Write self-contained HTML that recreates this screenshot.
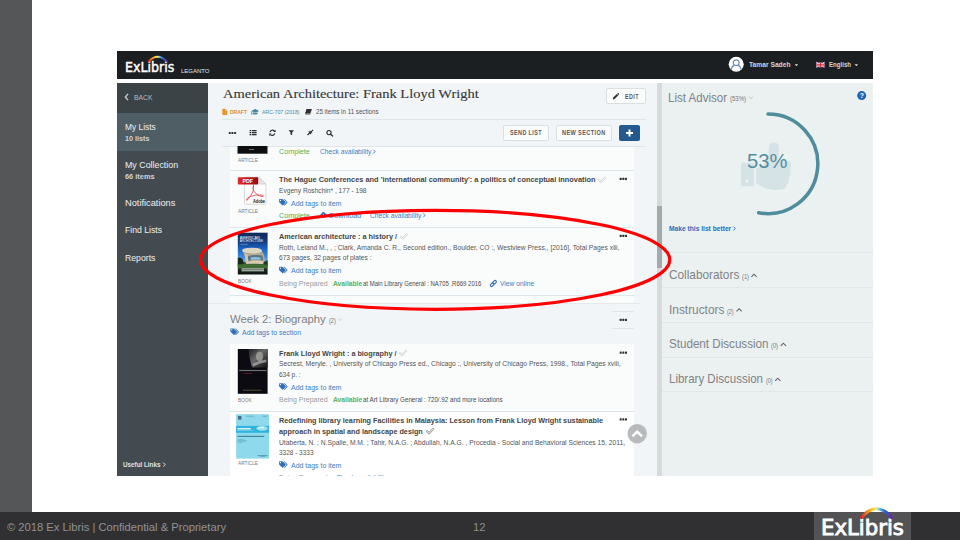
<!DOCTYPE html>
<html lang="en">
<head>
<meta charset="utf-8">
<title>Leganto - American Architecture: Frank Lloyd Wright</title>
<style>
html,body{margin:0;padding:0;}
body{width:960px;height:540px;position:relative;overflow:hidden;background:#ffffff;font-family:"Liberation Sans",sans-serif;}
.a{position:absolute;display:block;}
.t{position:absolute;display:block;white-space:nowrap;transform-origin:0 0;}
svg{position:absolute;overflow:visible;}
#leftbar{left:0;top:0;width:32px;height:512px;background:#555658;}
#footer{left:0;top:512px;width:960px;height:28px;background:#303032;}
#logobox{left:814px;top:512px;width:97px;height:28px;background:#535355;}
#shot{left:117px;top:51px;width:756px;height:425px;overflow:hidden;background:#ffffff;}
#in{left:-117px;top:-51px;width:960px;height:540px;}
#topbar{left:117px;top:51px;width:756px;height:28px;background:#1b1f22;}
#sidebar{left:117px;top:83px;width:91px;height:393px;background:#444b50;}
#backrow{left:117px;top:83px;width:91px;height:30px;background:#3c4347;}
#selrow{left:117px;top:113px;width:91px;height:38px;background:#4f5e64;}
#main{left:208px;top:83px;width:449px;height:393px;background:#f1f5f7;}
#track{left:657px;top:83px;width:5px;height:393px;background:#d6dadc;}
#thumb{left:657px;top:206px;width:5px;height:62px;background:#a4a9ac;}
#right{left:662px;top:83px;width:211px;height:393px;background:#ebf0f1;}
.hr{height:1px;background:#dde6eb;}
.panel{left:230px;width:404px;background:#fafcfc;}
.btn{background:#fafcfc;border:1px solid #dcdfe1;border-radius:2px;box-sizing:border-box;}
</style>
</head>
<body>
<div class="a" id="leftbar"></div>
<div class="a" id="footer"></div>
<div class="a" id="logobox"></div>
<span class="t" style="left:7.00px;top:521.00px;font:400 11.6px/1 'Liberation Sans', sans-serif;color:#929294;transform:scaleX(0.9656);">© 2018 Ex Libris | Confidential &amp; Proprietary</span>
<span class="t" style="left:472.80px;top:521.00px;font:400 11.6px/1 'Liberation Sans', sans-serif;color:#8c8c8e;transform:scaleX(0.9685);">12</span>
<span class="t" style="left:821.30px;top:517.00px;font:400 21.4px/1 'DejaVu Sans', 'Liberation Sans', sans-serif;color:#ffffff;transform:scaleX(0.9928);-webkit-text-stroke:0.9px #ffffff;">ExLibris</span>
<svg class="a" style="left:858px;top:505px" width="38" height="16" viewBox="858 505 38 16">
<defs><linearGradient id="rb2" x1="0" y1="0" x2="1" y2="0"><stop offset="0" stop-color="#d7262b"/><stop offset="0.2" stop-color="#f08a1c"/><stop offset="0.38" stop-color="#f7d31d"/><stop offset="0.5" stop-color="#e6e89c"/><stop offset="0.62" stop-color="#5ab4e6"/><stop offset="0.8" stop-color="#2a5fd0"/><stop offset="1" stop-color="#6a2c9c"/></linearGradient></defs>
<path d="M861.5 517.5 Q876.5 500 891.5 517.5" fill="none" stroke="url(#rb2)" stroke-width="3.2" stroke-linecap="round"/>
</svg>

<div class="a" id="shot"><div class="a" id="in">
<div class="a" id="topbar"></div>
<div class="a" id="sidebar"></div>
<div class="a" id="backrow"></div>
<div class="a" id="selrow"></div>
<div class="a" id="main"></div>
<div class="a" id="track"></div>
<div class="a" id="thumb"></div>
<div class="a" id="right"></div>

<!-- top bar -->
<span class="t" style="left:124.80px;top:60.00px;font:400 14.4px/1 'DejaVu Sans', 'Liberation Sans', sans-serif;color:#ffffff;transform:scaleX(0.8759);-webkit-text-stroke:0.5px #ffffff;">ExLibris</span>
<span class="t" style="left:181.00px;top:69.00px;font:400 5.3px/1 'Liberation Sans', sans-serif;color:#e6e6e6;transform:scaleX(1.1301);">LEGANTO</span>
<span class="t" style="left:748.80px;top:61.00px;font:700 7.8px/1 'Liberation Sans', sans-serif;color:#d2d5d7;transform:scaleX(0.8576);">Tamar Sadeh</span>
<span class="t" style="left:828.70px;top:61.00px;font:700 7.8px/1 'Liberation Sans', sans-serif;color:#d2d5d7;transform:scaleX(0.7845);">English</span>
<svg class="a" style="left:146px;top:53px" width="24" height="10" viewBox="146 53 24 10">
<defs><linearGradient id="rb1" x1="0" y1="0" x2="1" y2="0"><stop offset="0" stop-color="#d7262b"/><stop offset="0.2" stop-color="#f08a1c"/><stop offset="0.38" stop-color="#f7d31d"/><stop offset="0.5" stop-color="#e6e89c"/><stop offset="0.62" stop-color="#5ab4e6"/><stop offset="0.8" stop-color="#2a5fd0"/><stop offset="1" stop-color="#6a2c9c"/></linearGradient></defs>
<path d="M148.6 61.4 Q157.6 52 166.8 61.4" fill="none" stroke="url(#rb1)" stroke-width="2" stroke-linecap="round"/>
</svg>
<svg class="a" style="left:728px;top:56px" width="140" height="18" viewBox="728 56 140 18">
<circle cx="736.2" cy="64.2" r="7.5" fill="#ffffff"/>
<circle cx="736.2" cy="62.8" r="2.9" fill="none" stroke="#6f8fb4" stroke-width="1.2"/>
<path d="M731.4 69.8 Q731.8 66 734.4 65.4 M738 65.4 Q740.6 66 741 69.8" fill="none" stroke="#6f8fb4" stroke-width="1.2"/>
<path d="M794.6 64.2 h3.6 l-1.8 2 z" fill="#d8dadb"/>
<path d="M854.6 64.2 h3.6 l-1.8 2 z" fill="#d8dadb"/>
<rect x="816.3" y="62.4" width="8.2" height="4.9" fill="#2b3a8c"/>
<path d="M816.3 62.4 L824.5 67.3 M824.5 62.4 L816.3 67.3" stroke="#ffffff" stroke-width="1.3"/>
<path d="M816.3 62.4 L824.5 67.3 M824.5 62.4 L816.3 67.3" stroke="#d5202f" stroke-width="0.5"/>
<path d="M820.4 62.4 V67.3 M816.3 64.85 H824.5" stroke="#ffffff" stroke-width="2"/>
<path d="M820.4 62.4 V67.3 M816.3 64.85 H824.5" stroke="#d5202f" stroke-width="1.1"/>
</svg>

<!-- sidebar -->
<span class="t" style="left:133.90px;top:95.00px;font:400 6.7px/1 'Liberation Sans', sans-serif;color:#b4bcc1;transform:scaleX(1.0154);">BACK</span>
<span class="t" style="left:124.60px;top:123.00px;font:400 8.8px/1 'Liberation Sans', sans-serif;color:#eef0f1;transform:scaleX(0.9515);">My Lists</span>
<span class="t" style="left:124.60px;top:135.00px;font:700 7.0px/1 'Liberation Sans', sans-serif;color:#cdd3d6;transform:scaleX(1.0274);">10 lists</span>
<span class="t" style="left:124.60px;top:161.00px;font:400 8.8px/1 'Liberation Sans', sans-serif;color:#eef0f1;transform:scaleX(1.0054);">My Collection</span>
<span class="t" style="left:124.60px;top:173.00px;font:700 7.0px/1 'Liberation Sans', sans-serif;color:#cdd3d6;transform:scaleX(1.0595);">66 items</span>
<span class="t" style="left:124.60px;top:199.00px;font:400 8.8px/1 'Liberation Sans', sans-serif;color:#eef0f1;transform:scaleX(1.0517);">Notifications</span>
<span class="t" style="left:124.60px;top:226.00px;font:400 8.8px/1 'Liberation Sans', sans-serif;color:#eef0f1;transform:scaleX(0.9826);">Find Lists</span>
<span class="t" style="left:124.60px;top:254.00px;font:400 8.8px/1 'Liberation Sans', sans-serif;color:#eef0f1;transform:scaleX(0.9866);">Reports</span>
<span class="t" style="left:123.00px;top:462.00px;font:700 6.6px/1 'Liberation Sans', sans-serif;color:#dfe3e5;transform:scaleX(0.9562);">Useful Links</span>
<svg class="a" style="left:120px;top:90px" width="60" height="385" viewBox="120 90 60 385">
<path d="M128 93.9 L125.4 97 L128 100.1" fill="none" stroke="#c4cace" stroke-width="1.4"/>
<path d="M163.2 462.6 L165.2 464.6 L163.2 466.6" fill="none" stroke="#dfe3e5" stroke-width="1"/>
</svg>

<!-- main header -->
<div class="a hr" style="left:222px;top:119px;width:424px"></div>
<div class="a hr" style="left:222px;top:146px;width:424px"></div>
<div class="a btn" style="left:606.3px;top:88.2px;width:39.5px;height:15.4px"></div>
<div class="a btn" style="left:503.4px;top:124.8px;width:45.3px;height:16.2px"></div>
<div class="a btn" style="left:555.5px;top:124.8px;width:56.9px;height:16.2px"></div>
<div class="a" style="left:619px;top:124.8px;width:21px;height:16.2px;background:#24598f;border-radius:2px"></div>

<!-- list panels -->
<div class="a panel" style="top:146.5px;height:156px"></div>
<div class="a hr" style="left:230px;top:170px;width:404px"></div>
<div class="a hr" style="left:230px;top:226.6px;width:404px"></div>
<div class="a hr" style="left:230px;top:295px;width:404px"></div>
<div class="a hr" style="left:208px;top:302.6px;width:433px;background:#e3eaee"></div>
<div class="a hr" style="left:612px;top:311px;width:22px"></div>
<div class="a hr" style="left:612px;top:328px;width:22px"></div>
<div class="a panel" style="top:344px;height:67px"></div>
<div class="a panel" style="top:411px;height:66px;background:#ffffff"></div>
<div class="a hr" style="left:230px;top:410.6px;width:404px"></div>

<svg class="a" style="left:208px;top:83px" width="449" height="393" viewBox="208 83 449 393"><path d="M222.3 109.4 Q222.3 108.8 222.9 108.8 L225.3 108.8 L227.3 110.8 L227.3 114.4 Q227.3 115 226.7 115 L222.9 115 Q222.3 115 222.3 114.4 Z" fill="#e8952f"/><path d="M225.3 108.8 L225.3 110.8 L227.3 110.8 Z" fill="#f6c88c"/><g fill="#3f8799"><path d="M251.2 110.9 L255.2 109.1 L259.2 110.9 L255.2 112.7 Z"/><path d="M252.9 112.2 L252.9 113.9 Q255.2 115.3 257.5 113.9 L257.5 112.2 L255.2 113.3 Z"/><path d="M251.5 111.1 L252.2 111.4 L252.3 114.7 L251.3 114.7 Z"/></g><g fill="#333"><path d="M306.9 109 L311.9 109 L310.4 113.4 L305.4 113.4 Z"/><path d="M305.4 113.4 L310.4 113.4 L310.2 114.6 L305.6 114.6 Q305 114.2 305.4 113.4 Z" fill="#555"/><path d="M305.3 113.2 L306.7 109 L307.3 109 L305.9 113.4 Z" fill="#111"/></g><rect x="228.80" y="131.90" width="2" height="2.2" rx="0.5" fill="#303030"/><rect x="231.45" y="131.90" width="2" height="2.2" rx="0.5" fill="#303030"/><rect x="234.10" y="131.90" width="2" height="2.2" rx="0.5" fill="#303030"/><rect x="249.6" y="130.0" width="1.5" height="1.3" fill="#2e2e2e"/><rect x="251.8" y="130.0" width="4.8" height="1.3" fill="#2e2e2e"/><rect x="249.6" y="132.0" width="1.5" height="1.3" fill="#2e2e2e"/><rect x="251.8" y="132.0" width="4.8" height="1.3" fill="#2e2e2e"/><rect x="249.6" y="134.0" width="1.5" height="1.3" fill="#2e2e2e"/><rect x="251.8" y="134.0" width="4.8" height="1.3" fill="#2e2e2e"/><g fill="none" stroke="#2e2e2e" stroke-width="1.2"><path d="M270.1 132.2 A2.5 2.5 0 0 1 274.4 131"/><path d="M274.7 133.4 A2.5 2.5 0 0 1 270.4 134.6"/></g><path d="M275.6 129.7 L275.6 132 L273.2 132 Z" fill="#2e2e2e"/><path d="M269.2 136 L269.2 133.6 L271.6 133.6 Z" fill="#2e2e2e"/><path d="M288.6 130.2 L294 130.2 L292.1 132.6 L292.1 135.2 L290.5 134.2 L290.5 132.6 Z" fill="#2e2e2e"/><g fill="#2e2e2e"><path d="M307.1 134.6 L309.2 132.5 L308.2 131.6 L311 131.6 L311 134.4 L310 133.4 L307.9 135.5 Z"/><path d="M313.5 130.2 L311.5 132.2 L312.5 133.2 L309.7 133.2 L309.7 130.4 L310.7 131.4 L312.7 129.4 Z"/></g><circle cx="329" cy="132.6" r="2.1" fill="none" stroke="#2e2e2e" stroke-width="1.1"/><path d="M330.6 134.2 L332.6 136" stroke="#2e2e2e" stroke-width="1.3" stroke-linecap="round"/><path d="M612.8 99.4 L613.2 97.6 L616.9 93.9 L618.3 95.3 L614.6 99 Z" fill="#2e2e2e"/><path d="M617.3 93.5 L617.8 93 Q618.1 92.8 618.4 93.1 L619.1 93.8 Q619.4 94.1 619.1 94.4 L618.7 94.9 Z" fill="#2e2e2e"/><path d="M626 133 H633 M629.5 129.5 V136.5" stroke="#ffffff" stroke-width="2"/><g transform="translate(279.1 199.0)" fill="#2f6fb7"><path d="M0 0.5 Q0 0 0.5 0 L3.1 0 Q3.5 0 3.9 0.4 L6.5 3 Q6.9 3.4 6.5 3.8 L4 6.3 Q3.6 6.7 3.2 6.3 L0.4 3.6 Q0 3.2 0 2.8 Z M1.4 0.8 A0.6 0.6 0 1 0 1.41 0.8 Z" fill-rule="evenodd"/><path d="M4.3 0 L5 0 Q5.4 0 5.8 0.4 L8.3 3 Q8.7 3.4 8.3 3.8 L5.8 6.3 Q5.4 6.7 5 6.3 L4.8 6.1 L7.2 3.7 Q7.6 3.4 7.2 3 Z"/></g><g transform="translate(279.1 266.8)" fill="#2f6fb7"><path d="M0 0.5 Q0 0 0.5 0 L3.1 0 Q3.5 0 3.9 0.4 L6.5 3 Q6.9 3.4 6.5 3.8 L4 6.3 Q3.6 6.7 3.2 6.3 L0.4 3.6 Q0 3.2 0 2.8 Z M1.4 0.8 A0.6 0.6 0 1 0 1.41 0.8 Z" fill-rule="evenodd"/><path d="M4.3 0 L5 0 Q5.4 0 5.8 0.4 L8.3 3 Q8.7 3.4 8.3 3.8 L5.8 6.3 Q5.4 6.7 5 6.3 L4.8 6.1 L7.2 3.7 Q7.6 3.4 7.2 3 Z"/></g><g transform="translate(279.1 383.2)" fill="#2f6fb7"><path d="M0 0.5 Q0 0 0.5 0 L3.1 0 Q3.5 0 3.9 0.4 L6.5 3 Q6.9 3.4 6.5 3.8 L4 6.3 Q3.6 6.7 3.2 6.3 L0.4 3.6 Q0 3.2 0 2.8 Z M1.4 0.8 A0.6 0.6 0 1 0 1.41 0.8 Z" fill-rule="evenodd"/><path d="M4.3 0 L5 0 Q5.4 0 5.8 0.4 L8.3 3 Q8.7 3.4 8.3 3.8 L5.8 6.3 Q5.4 6.7 5 6.3 L4.8 6.1 L7.2 3.7 Q7.6 3.4 7.2 3 Z"/></g><g transform="translate(279.1 461.3)" fill="#2f6fb7"><path d="M0 0.5 Q0 0 0.5 0 L3.1 0 Q3.5 0 3.9 0.4 L6.5 3 Q6.9 3.4 6.5 3.8 L4 6.3 Q3.6 6.7 3.2 6.3 L0.4 3.6 Q0 3.2 0 2.8 Z M1.4 0.8 A0.6 0.6 0 1 0 1.41 0.8 Z" fill-rule="evenodd"/><path d="M4.3 0 L5 0 Q5.4 0 5.8 0.4 L8.3 3 Q8.7 3.4 8.3 3.8 L5.8 6.3 Q5.4 6.7 5 6.3 L4.8 6.1 L7.2 3.7 Q7.6 3.4 7.2 3 Z"/></g><g transform="translate(230.4 328.5)" fill="#2f6fb7"><path d="M0 0.5 Q0 0 0.5 0 L3.1 0 Q3.5 0 3.9 0.4 L6.5 3 Q6.9 3.4 6.5 3.8 L4 6.3 Q3.6 6.7 3.2 6.3 L0.4 3.6 Q0 3.2 0 2.8 Z M1.4 0.8 A0.6 0.6 0 1 0 1.41 0.8 Z" fill-rule="evenodd"/><path d="M4.3 0 L5 0 Q5.4 0 5.8 0.4 L8.3 3 Q8.7 3.4 8.3 3.8 L5.8 6.3 Q5.4 6.7 5 6.3 L4.8 6.1 L7.2 3.7 Q7.6 3.4 7.2 3 Z"/></g><rect x="619.70" y="177.80" width="2" height="2.2" rx="0.5" fill="#303030"/><rect x="622.35" y="177.80" width="2" height="2.2" rx="0.5" fill="#303030"/><rect x="625.00" y="177.80" width="2" height="2.2" rx="0.5" fill="#303030"/><rect x="619.70" y="234.80" width="2" height="2.2" rx="0.5" fill="#303030"/><rect x="622.35" y="234.80" width="2" height="2.2" rx="0.5" fill="#303030"/><rect x="625.00" y="234.80" width="2" height="2.2" rx="0.5" fill="#303030"/><rect x="619.70" y="351.50" width="2" height="2.2" rx="0.5" fill="#303030"/><rect x="622.35" y="351.50" width="2" height="2.2" rx="0.5" fill="#303030"/><rect x="625.00" y="351.50" width="2" height="2.2" rx="0.5" fill="#303030"/><rect x="619.70" y="418.20" width="2" height="2.2" rx="0.5" fill="#303030"/><rect x="622.35" y="418.20" width="2" height="2.2" rx="0.5" fill="#303030"/><rect x="625.00" y="418.20" width="2" height="2.2" rx="0.5" fill="#303030"/><rect x="619.70" y="318.80" width="2" height="2.2" rx="0.5" fill="#303030"/><rect x="622.35" y="318.80" width="2" height="2.2" rx="0.5" fill="#303030"/><rect x="625.00" y="318.80" width="2" height="2.2" rx="0.5" fill="#303030"/><g transform="translate(598.1 176.7)" fill="none" stroke-linecap="round" stroke-linejoin="round"><path d="M0.9 3.3 L2.9 5.2 L7 0.9" stroke="#cfd3d5" stroke-width="2"/><path d="M0.9 3.3 L2.9 5.2 L7 0.9" stroke="#fafcfc" stroke-width="0.8"/></g><g transform="translate(399.8 233.4)" fill="none" stroke-linecap="round" stroke-linejoin="round"><path d="M0.9 3.3 L2.9 5.2 L7 0.9" stroke="#cfd3d5" stroke-width="2"/><path d="M0.9 3.3 L2.9 5.2 L7 0.9" stroke="#fafcfc" stroke-width="0.8"/></g><g transform="translate(399.0 350.0)" fill="none" stroke-linecap="round" stroke-linejoin="round"><path d="M0.9 3.3 L2.9 5.2 L7 0.9" stroke="#cfd3d5" stroke-width="2"/><path d="M0.9 3.3 L2.9 5.2 L7 0.9" stroke="#fafcfc" stroke-width="0.8"/></g><g transform="translate(426.2 428.0)" fill="none" stroke-linecap="round" stroke-linejoin="round"><path d="M0.9 3.3 L2.9 5.2 L7 0.9" stroke="#8f9598" stroke-width="2"/><path d="M0.9 3.3 L2.9 5.2 L7 0.9" stroke="#ffffff" stroke-width="0.8"/></g><path d="M373.2 149.70 L375.10 151.6 L373.2 153.50" fill="none" stroke="#2f6fb7" stroke-width="0.9"/><path d="M423.2 213.50 L425.10 215.4 L423.2 217.30" fill="none" stroke="#2f6fb7" stroke-width="0.9"/><path d="M389.6 476.10 L391.50 478.0 L389.6 479.90" fill="none" stroke="#2f6fb7" stroke-width="0.9"/><path d="M338.2 318.6 L340.1 320.6 L342 318.6" fill="none" stroke="#c3c8cb" stroke-width="0.8"/><g fill="#2f6fb7"><path d="M321.6 217.6 Q319.8 217.4 319.9 215.7 Q320 214.4 321.3 214.1 Q321.5 212.2 323.4 212.1 Q325 212.1 325.5 213.6 Q327 213.9 327 215.6 Q327 217.4 325.3 217.6 Z"/></g><path d="M323.4 213.8 V216.6 M322.2 215.5 L323.4 216.7 L324.6 215.5" fill="none" stroke="#fafcfc" stroke-width="0.7"/><g fill="none" stroke="#2f6fb7" stroke-width="1.15"><rect x="-2" y="-1.25" width="4" height="2.5" rx="1.25" transform="translate(492.1 284.7) rotate(-45)"/><rect x="-2" y="-1.25" width="4" height="2.5" rx="1.25" transform="translate(494.6 282.2) rotate(-45)"/></g><circle cx="637.2" cy="433.7" r="9.7" fill="#b9babb"/><path d="M632.4 436.4 L637.2 431.6 L642 436.4" fill="none" stroke="#ffffff" stroke-width="2.4"/></svg>
<svg class="a" style="left:230px;top:146px" width="45" height="330" viewBox="230 146 45 330"><rect x="237.5" y="146" width="30" height="7.7" fill="#0e0e10"/><rect x="249" y="149.2" width="5" height="0.8" fill="#8a8a8a"/><defs><linearGradient id="pdfr" x1="0" y1="0" x2="1" y2="0"><stop offset="0" stop-color="#e32b2b"/><stop offset="1" stop-color="#920c0c"/></linearGradient></defs><path d="M244.6 177.1 L258.9 177.1 L265.9 184.1 L265.9 203.4 Q265.9 204.2 265.1 204.2 L245.4 204.2 Q244.6 204.2 244.6 203.4 Z" fill="#fdfdfd" stroke="#c9c9c9" stroke-width="0.7"/><path d="M258.9 177.1 L258.9 183 Q258.9 184.1 260 184.1 L265.9 184.1 Z" fill="#e4e4e4" stroke="#c2c2c2" stroke-width="0.5"/><g fill="none" stroke="#e0555c" stroke-width="0.9" stroke-linecap="round"><path d="M253.6 185.2 Q254.6 190.5 250.4 196.5 Q248 200 246.6 200.3 Q245.8 199 249.2 196.9 Q255 194 262.8 195.2 Q264.6 196.6 262 196.6 Q257 196.2 253.4 190.6 Q252.4 187.4 253.6 185.2"/></g><rect x="237.8" y="177.3" width="20.4" height="7.1" rx="0.6" fill="url(#pdfr)"/><text x="242.5" y="182.7" font-family="'Liberation Sans', sans-serif" font-weight="700" font-size="5.3" fill="#ffffff" textLength="10.4" lengthAdjust="spacingAndGlyphs">PDF</text><text x="253" y="202.8" font-family="'Liberation Sans', sans-serif" font-weight="700" font-size="5.4" fill="#151515" textLength="12" lengthAdjust="spacingAndGlyphs">Adobe</text><defs><linearGradient id="sky" x1="0" y1="0" x2="0" y2="1"><stop offset="0" stop-color="#0f2857"/><stop offset="0.2" stop-color="#123a7e"/><stop offset="0.38" stop-color="#1b62c2"/><stop offset="0.58" stop-color="#3a8be0"/><stop offset="0.68" stop-color="#6aaeea"/><stop offset="0.72" stop-color="#31502e"/><stop offset="0.82" stop-color="#3d6a34"/><stop offset="0.88" stop-color="#1b2a1b"/><stop offset="1" stop-color="#0c120e"/></linearGradient></defs><rect x="237.8" y="232.7" width="29.8" height="41.8" fill="url(#sky)"/><path d="M242 250.4 Q242.4 247.6 252 247.7 Q261.6 247.9 262.2 251 Q262 253.6 254 254 Q243 253.6 242 250.4 Z" fill="#ddd5c2"/><path d="M243 252 Q252 255.6 262.2 252 Q265 255 264.6 260 L263 263.6 L246.4 264.4 L244.8 257 Z" fill="#b4a88f"/><path d="M247.6 256.2 Q255 254.4 262.4 255.6 L263.2 260.4 Q255 259 248.6 261 Z" fill="#5d7486"/><path d="M250.5 257.6 Q255.5 256.6 260.6 257.4 L260.8 259.6 Q255.5 259 250.9 260 Z" fill="#8fc0dd"/><path d="M245 254.2 Q246 254 247.6 254.6 L248.4 263.6 L246 264 Z" fill="#d2c8b2"/><path d="M246.6 262.2 Q255 259.6 263.6 261.2 L263.4 264.4 Q255 263 247 265.2 Z" fill="#d6ccb6"/><path d="M237.8 258 Q240 256.6 242.6 259 L244 265 L237.8 266 Z" fill="#182818"/><path d="M264 262 L267.6 260 L267.6 266 L263 266 Z" fill="#213822"/><path d="M237.8 264.6 Q250 262.8 267.6 264.8 L267.6 268 L237.8 268 Z" fill="#3f6b35"/><text x="239.8" y="238.5" font-family="'Liberation Sans', sans-serif" font-size="3.4" fill="#ffffff" textLength="20" lengthAdjust="spacingAndGlyphs">AMERICAN</text><text x="239.8" y="242" font-family="'Liberation Sans', sans-serif" font-size="3.6" fill="#ffffff" textLength="23.1" lengthAdjust="spacingAndGlyphs">ARCHITECTURE</text><rect x="240.2" y="243.9" width="7.6" height="0.6" fill="#8fa6c4"/><rect x="241.5" y="268.4" width="22.5" height="1.1" fill="#d5d9d5"/><rect x="241.5" y="270.2" width="22.5" height="1.1" fill="#c2c7c2"/><rect x="237.8" y="349" width="29.8" height="44.8" fill="#0b0b11"/><defs><linearGradient id="ph" x1="0" y1="0" x2="1" y2="1"><stop offset="0" stop-color="#1c1c1e"/><stop offset="0.45" stop-color="#6a6a68"/><stop offset="0.7" stop-color="#3a3a3a"/><stop offset="1" stop-color="#161618"/></linearGradient></defs><path d="M248.5 349 L267.6 349 L267.6 367.6 L252 367.6 Q249 358 248.5 349 Z" fill="url(#ph)"/><ellipse cx="259.5" cy="356.5" rx="3.6" ry="5" fill="#a5a5a2" opacity="0.75"/><path d="M252.5 364 Q258 361 266 359.6 L266.5 362 Q258 363.6 253 366.6 Z" fill="#b5b5b2" opacity="0.7"/><rect x="239.2" y="369.9" width="27.2" height="1.2" fill="#6e6e72"/><rect x="243.5" y="373" width="8.5" height="0.7" fill="#7a1f24"/><rect x="243" y="389.7" width="18.4" height="1.1" fill="#4d4634"/><rect x="236.1" y="414.2" width="32.9" height="44.4" fill="#8fd9ec"/><rect x="236.1" y="425.9" width="32.9" height="6.9" fill="#2fb5dd"/><rect x="237.4" y="428" width="13.4" height="1.5" fill="#d9f3fb"/><rect x="237.4" y="430.4" width="16" height="0.6" fill="#8fd9ec"/><ellipse cx="262" cy="428.4" rx="5.6" ry="2.3" fill="#9fe0f2"/><rect x="258.5" y="427" width="5.5" height="1.3" fill="#e4f7fc"/><rect x="238" y="416" width="3.4" height="3.6" fill="#3f6f82"/><rect x="246.4" y="415.8" width="7.2" height="0.6" fill="#4f8fa4"/><rect x="262" y="415.8" width="5" height="0.6" fill="#4f8fa4"/><rect x="237.6" y="435.8" width="26.6" height="1.1" fill="#3d7f97"/><rect x="237.6" y="439" width="6" height="0.5" fill="#5aa5bd"/><rect x="237.6" y="440.2" width="9" height="0.5" fill="#5aa5bd"/><rect x="237.6" y="441.4" width="8" height="0.5" fill="#5aa5bd"/><rect x="237.6" y="442.6" width="5" height="0.5" fill="#5aa5bd"/><rect x="257.3" y="455" width="10.3" height="0.6" fill="#3d7f97"/><rect x="259.5" y="456" width="6" height="0.6" fill="#4f94ab"/></svg>

<span class="t" style="left:222.50px;top:88.00px;font:400 12.7px/1 'Liberation Serif', serif;color:#383838;transform:scaleX(1.1417);-webkit-text-stroke:0.12px #383838;">American Architecture: Frank Lloyd Wright</span>
<span class="t" style="left:229.70px;top:110.00px;font:700 5.3px/1 'Liberation Sans', sans-serif;color:#e08a2a;transform:scaleX(0.9469);">DRAFT</span>
<span class="t" style="left:261.70px;top:110.00px;font:400 5.6px/1 'Liberation Sans', sans-serif;color:#4a8a9c;transform:scaleX(0.9206);">ARC-707 (2018)</span>
<span class="t" style="left:315.80px;top:109.00px;font:400 6.3px/1 'Liberation Sans', sans-serif;color:#525252;transform:scaleX(0.9828);">25 items in 11 sections</span>
<span class="t" style="left:624.80px;top:94.00px;font:700 6.8px/1 'Liberation Sans', sans-serif;color:#5a5a5a;transform:scaleX(0.7950);letter-spacing:0.5px;">EDIT</span>
<span class="t" style="left:509.80px;top:130.00px;font:700 6.8px/1 'Liberation Sans', sans-serif;color:#5a5a5a;transform:scaleX(0.8000);letter-spacing:0.5px;">SEND LIST</span>
<span class="t" style="left:562.00px;top:130.00px;font:700 6.8px/1 'Liberation Sans', sans-serif;color:#5a5a5a;transform:scaleX(0.8154);letter-spacing:0.5px;">NEW SECTION</span>
<span class="t" style="left:238.00px;top:158.00px;font:400 5.9px/1 'Liberation Sans', sans-serif;color:#7a7a7a;transform:scaleX(0.7990);">ARTICLE</span>
<span class="t" style="left:279.00px;top:148.00px;font:400 7.9px/1 'Liberation Sans', sans-serif;color:#55b155;transform:scaleX(0.9088);">Complete</span>
<span class="t" style="left:319.70px;top:148.00px;font:400 7.0px/1 'Liberation Sans', sans-serif;color:#3b7cc0;transform:scaleX(0.9502);">Check availability</span>
<span class="t" style="left:279.20px;top:176.00px;font:700 8.0px/1 'Liberation Sans', sans-serif;color:#454545;transform:scaleX(0.9219);">The Hague Conferences and 'international community': a politics of conceptual innovation</span>
<span class="t" style="left:279.20px;top:187.00px;font:400 7.3px/1 'Liberation Sans', sans-serif;color:#555555;transform:scaleX(0.9063);">Evgeny Roshchin* , 177 - 198</span>
<span class="t" style="left:290.80px;top:200.00px;font:400 7.9px/1 'Liberation Sans', sans-serif;color:#3b7cc0;transform:scaleX(0.8837);">Add tags to item</span>
<span class="t" style="left:279.00px;top:212.00px;font:400 7.9px/1 'Liberation Sans', sans-serif;color:#55b155;transform:scaleX(0.9088);">Complete</span>
<span class="t" style="left:328.50px;top:212.00px;font:400 7.0px/1 'Liberation Sans', sans-serif;color:#3b7cc0;transform:scaleX(1.0372);">Download</span>
<span class="t" style="left:369.70px;top:212.00px;font:400 7.0px/1 'Liberation Sans', sans-serif;color:#3b7cc0;transform:scaleX(0.9502);">Check availability</span>
<span class="t" style="left:238.00px;top:209.00px;font:400 5.9px/1 'Liberation Sans', sans-serif;color:#7a7a7a;transform:scaleX(0.8071);">ARTICLE</span>
<span class="t" style="left:279.20px;top:233.00px;font:700 8.0px/1 'Liberation Sans', sans-serif;color:#454545;transform:scaleX(0.9120);">American architecture : a history /</span>
<span class="t" style="left:279.20px;top:244.00px;font:400 7.3px/1 'Liberation Sans', sans-serif;color:#555555;transform:scaleX(0.9222);">Roth, Leland M., , ; Clark, Amanda C. R., Second edition., Boulder, CO :, Westview Press,, [2016], Total Pages xlii,</span>
<span class="t" style="left:279.20px;top:254.00px;font:400 7.3px/1 'Liberation Sans', sans-serif;color:#555555;transform:scaleX(0.9083);">673 pages, 32 pages of plates :</span>
<span class="t" style="left:290.80px;top:267.00px;font:400 7.9px/1 'Liberation Sans', sans-serif;color:#3b7cc0;transform:scaleX(0.8837);">Add tags to item</span>
<span class="t" style="left:279.20px;top:280.00px;font:400 7.6px/1 'Liberation Sans', sans-serif;color:#9a9a9a;transform:scaleX(0.9208);">Being Prepared</span>
<span class="t" style="left:332.50px;top:280.00px;font:700 7.4px/1 'Liberation Sans', sans-serif;color:#58b358;transform:scaleX(0.9072);">Available</span>
<span class="t" style="left:363.30px;top:281.00px;font:400 6.7px/1 'Liberation Sans', sans-serif;color:#4a4a4a;transform:scaleX(0.8946);">at Main Library General : NA705 .R669 2016</span>
<span class="t" style="left:500.00px;top:281.00px;font:400 6.6px/1 'Liberation Sans', sans-serif;color:#3b7cc0;transform:scaleX(1.0176);">View online</span>
<span class="t" style="left:238.00px;top:279.00px;font:400 5.9px/1 'Liberation Sans', sans-serif;color:#7a7a7a;transform:scaleX(0.8044);">BOOK</span>
<span class="t" style="left:229.90px;top:314.00px;font:400 11.8px/1 'Liberation Sans', sans-serif;color:#808080;transform:scaleX(0.9631);">Week 2: Biography</span>
<span class="t" style="left:329.00px;top:318.00px;font:400 6.4px/1 'Liberation Sans', sans-serif;color:#777777;transform:scaleX(0.8704);">(2)</span>
<span class="t" style="left:242.20px;top:329.00px;font:400 7.9px/1 'Liberation Sans', sans-serif;color:#3b7cc0;transform:scaleX(0.8790);">Add tags to section</span>
<span class="t" style="left:279.20px;top:350.00px;font:700 8.0px/1 'Liberation Sans', sans-serif;color:#454545;transform:scaleX(0.9064);">Frank Lloyd Wright : a biography /</span>
<span class="t" style="left:279.20px;top:360.00px;font:400 7.3px/1 'Liberation Sans', sans-serif;color:#555555;transform:scaleX(0.9239);">Secrest, Meryle. , University of Chicago Press ed., Chicago :, University of Chicago Press, 1998., Total Pages xviii,</span>
<span class="t" style="left:279.20px;top:371.00px;font:400 7.3px/1 'Liberation Sans', sans-serif;color:#555555;transform:scaleX(0.8873);">634 p. :</span>
<span class="t" style="left:290.80px;top:384.00px;font:400 7.9px/1 'Liberation Sans', sans-serif;color:#3b7cc0;transform:scaleX(0.8837);">Add tags to item</span>
<span class="t" style="left:279.20px;top:396.00px;font:400 7.6px/1 'Liberation Sans', sans-serif;color:#9a9a9a;transform:scaleX(0.9208);">Being Prepared</span>
<span class="t" style="left:332.50px;top:396.00px;font:700 7.4px/1 'Liberation Sans', sans-serif;color:#58b358;transform:scaleX(0.9072);">Available</span>
<span class="t" style="left:363.30px;top:397.00px;font:400 6.7px/1 'Liberation Sans', sans-serif;color:#4a4a4a;transform:scaleX(0.9325);">at Art Library General : 720/.92 and more locations</span>
<span class="t" style="left:238.00px;top:398.00px;font:400 5.9px/1 'Liberation Sans', sans-serif;color:#7a7a7a;transform:scaleX(0.8044);">BOOK</span>
<span class="t" style="left:279.20px;top:417.00px;font:700 8.0px/1 'Liberation Sans', sans-serif;color:#454545;transform:scaleX(0.9083);">Redefining library learning Facilities in Malaysia: Lesson from Frank Lloyd Wright sustainable</span>
<span class="t" style="left:279.20px;top:428.00px;font:700 8.0px/1 'Liberation Sans', sans-serif;color:#454545;transform:scaleX(0.9060);">approach in spatial and landscape design</span>
<span class="t" style="left:279.20px;top:439.00px;font:400 7.3px/1 'Liberation Sans', sans-serif;color:#555555;transform:scaleX(0.9202);">Utaberta, N. ; N.Spalie, M.M. ; Tahir, N.A.G. ; Abdullah, N.A.G. , Procedia - Social and Behavioral Sciences 15, 2011,</span>
<span class="t" style="left:279.20px;top:449.00px;font:400 7.3px/1 'Liberation Sans', sans-serif;color:#555555;transform:scaleX(0.8857);">3328 - 3333</span>
<span class="t" style="left:290.80px;top:462.00px;font:400 7.9px/1 'Liberation Sans', sans-serif;color:#3b7cc0;transform:scaleX(0.8837);">Add tags to item</span>
<span class="t" style="left:238.00px;top:461.00px;font:400 5.9px/1 'Liberation Sans', sans-serif;color:#7a7a7a;transform:scaleX(0.8071);">ARTICLE</span>
<span class="t" style="left:279.20px;top:474.00px;font:400 7.6px/1 'Liberation Sans', sans-serif;color:#9a9a9a;transform:scaleX(0.9208);">Being Prepared</span>
<span class="t" style="left:336.00px;top:474.00px;font:400 7.0px/1 'Liberation Sans', sans-serif;color:#3b7cc0;transform:scaleX(0.9502);">Check availability</span>

<!-- right panel -->
<div class="a hr" style="left:662px;top:252px;width:211px;background:#e0e7e9"></div>
<div class="a hr" style="left:662px;top:287px;width:211px;background:#e0e7e9"></div>
<div class="a hr" style="left:662px;top:321.5px;width:211px;background:#e0e7e9"></div>
<div class="a hr" style="left:662px;top:356.5px;width:211px;background:#e0e7e9"></div>
<div class="a hr" style="left:662px;top:391px;width:211px;background:#e0e7e9"></div>
<svg class="a" style="left:662px;top:83px" width="211" height="393" viewBox="662 83 211 393"><circle cx="861.7" cy="95.6" r="4.5" fill="#1f63b5"/><text x="859.75" y="98.1" font-family="'Liberation Sans', sans-serif" font-weight="700" font-size="7" fill="#ffffff">?</text><path d="M748.8 96.6 L751 98.8 L753.2 96.6" fill="none" stroke="#b3b9bc" stroke-width="0.8"/><g fill="#d5e3e6"><rect x="741.1" y="162.8" width="12.8" height="23.5" rx="1.2"/><path d="M756.4 183.9 L756.4 168.3 Q760.5 167.2 763.3 165 Q767.6 160.6 768.4 156 L768.9 147.2 Q769.2 142.8 773.9 142.6 Q778.6 142.8 778.9 147 L778.9 152.8 Q778.4 157.6 777.2 160.6 L787.6 161 Q790.9 161.4 790.9 164.4 L790.9 167.6 Q790.9 169.6 790 170.6 Q791 173 790 175 Q790.2 176.6 788.7 177.4 Q789.6 180 788.3 181.7 Q788.4 183.6 786.7 184.6 Q786.8 186.4 785.4 187.4 Q784 189.2 782.2 189.4 Q777 190.2 772.2 189.7 Q767 189 763.3 187.2 Q760 185.2 756.4 183.9 Z"/></g><circle cx="747" cy="180.9" r="1.7" fill="#ecf1f2"/><path d="M768.0 114.00000000000001 A49.8 49.8 0 1 1 758.67 212.72" fill="none" stroke="#4e8d9c" stroke-width="3.5" stroke-linecap="round"/><path d="M733.4 226.60 L735.30 228.5 L733.4 230.40" fill="none" stroke="#2267b2" stroke-width="0.9"/><path d="M751.4 276.8 L754.0 274.2 L756.6 276.8" fill="none" stroke="#5f6466" stroke-width="1.1"/><path d="M736.5 311.3 L739.1 308.7 L741.7 311.3" fill="none" stroke="#5f6466" stroke-width="1.1"/><path d="M780.8 345.8 L783.4 343.2 L786.0 345.8" fill="none" stroke="#5f6466" stroke-width="1.1"/><path d="M775.2 380.8 L777.8000000000001 378.2 L780.4000000000001 380.8" fill="none" stroke="#5f6466" stroke-width="1.1"/></svg>

<span class="t" style="left:668.30px;top:92.00px;font:400 12.7px/1 'Liberation Sans', sans-serif;color:#7f8486;transform:scaleX(0.9094);">List Advisor</span>
<span class="t" style="left:730.30px;top:96.00px;font:400 6.4px/1 'Liberation Sans', sans-serif;color:#777777;transform:scaleX(0.9436);">(53%)</span>
<span class="t" style="left:747.20px;top:151.00px;font:400 20.6px/1 'Liberation Sans', sans-serif;color:#528f9e;transform:scaleX(0.9801);">53%</span>
<span class="t" style="left:668.80px;top:225.00px;font:700 7.5px/1 'Liberation Sans', sans-serif;color:#2a6cb4;transform:scaleX(0.8882);">Make this list better</span>
<span class="t" style="left:668.50px;top:269.00px;font:400 12.7px/1 'Liberation Sans', sans-serif;color:#7f8486;transform:scaleX(0.9315);">Collaborators</span>
<span class="t" style="left:741.80px;top:274.00px;font:400 6.4px/1 'Liberation Sans', sans-serif;color:#777777;transform:scaleX(0.8832);">(1)</span>
<span class="t" style="left:668.50px;top:304.00px;font:400 12.7px/1 'Liberation Sans', sans-serif;color:#7f8486;transform:scaleX(0.9353);">Instructors</span>
<span class="t" style="left:726.90px;top:309.00px;font:400 6.4px/1 'Liberation Sans', sans-serif;color:#777777;transform:scaleX(0.8576);">(2)</span>
<span class="t" style="left:668.50px;top:338.00px;font:400 12.7px/1 'Liberation Sans', sans-serif;color:#7f8486;transform:scaleX(0.9161);">Student Discussion</span>
<span class="t" style="left:771.00px;top:343.00px;font:400 6.4px/1 'Liberation Sans', sans-serif;color:#777777;transform:scaleX(0.8960);">(0)</span>
<span class="t" style="left:668.50px;top:373.00px;font:400 12.7px/1 'Liberation Sans', sans-serif;color:#7f8486;transform:scaleX(0.9068);">Library Discussion</span>
<span class="t" style="left:765.90px;top:378.00px;font:400 6.4px/1 'Liberation Sans', sans-serif;color:#777777;transform:scaleX(0.8576);">(0)</span>

<!-- red annotation ellipse -->
<svg class="a" style="left:190px;top:200px" width="490" height="120" viewBox="190 200 490 120">
<ellipse cx="435.2" cy="259.8" rx="234.6" ry="49.5" fill="none" stroke="#ff0000" stroke-width="3.2"/>
</svg>
</div></div>
</body>
</html>
